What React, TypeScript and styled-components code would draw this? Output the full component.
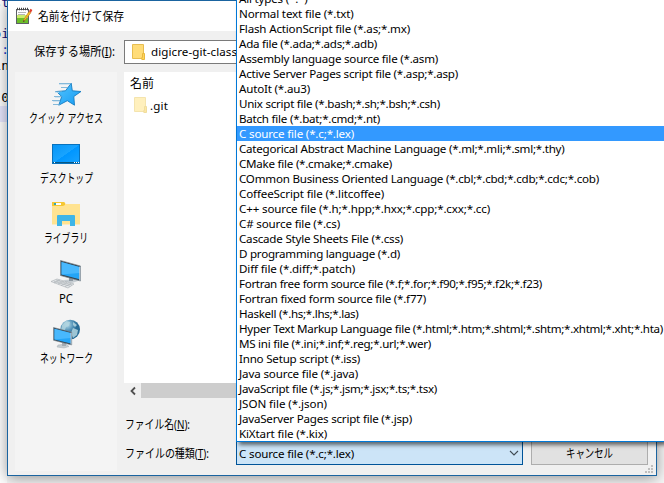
import React, { useLayoutEffect, useRef } from "react";
import styled, { createGlobalStyle } from "styled-components";

const GlobalStyle = createGlobalStyle`
  * { box-sizing: border-box; }
  body { margin: 0; overflow: hidden; }
`;

const Desktop = styled.div`
  position: relative;
  width: 664px;
  height: 483px;
  overflow: hidden;
  display: flex;
  background: #f7f7f7;
  color: #000;
  font: 12px/15px "Noto Sans", "Noto Sans CJK JP", sans-serif;
`;

const Editor = styled.div`
  width: 7px;
  height: 483px;
  flex: none;
  background: #fff;
  font: 13px/16px "DejaVu Sans Mono", monospace;
`;

const EditorLine = styled.div<{ $gap?: number; $current?: boolean; $color?: string }>`
  height: 16px;
  margin-top: ${(p) => p.$gap ?? 0}px;
  display: flex;
  justify-content: flex-end;
  overflow: hidden;
  color: ${(p) => p.$color ?? "#000"};
  background: ${(p) => (p.$current ? "#e8e8ff" : "transparent")};
`;

const EditorText = styled.span`
  margin-right: -2px;
`;

const Dialog = styled.section`
  position: relative;
  width: 650px;
  height: 476px;
  flex: none;
  display: flex;
  flex-direction: column;
  border: 1px solid #1a64a0;
  background: #f0f0f0;
  box-shadow: 0 2px 14px rgba(0, 0, 0, 0.42);
`;

const TitleBar = styled.header`
  height: 30px;
  flex: none;
  display: flex;
  align-items: center;
  gap: 5px;
  padding-left: 8px;
  background: #fff;
`;

const LookIn = styled.div`
  height: 41px;
  flex: none;
  display: flex;
  align-items: center;
  padding-left: 26px;
`;

const LookInLabel = styled.div`
  width: 90px;
`;

const FolderCombo = styled.div`
  display: flex;
  align-items: center;
  gap: 5px;
  width: 260px;
  height: 24px;
  padding-left: 7px;
  border: 1px solid #7a7a7a;
  background: #fff;
`;

const Content = styled.div`
  display: grid;
  grid-template-columns: 102px 1fr;
  column-gap: 7px;
  padding: 0 8px 4px 7px;
  flex: 1;
`;

const Places = styled.nav`
  background: #f4f4f4;
  padding-top: 6px;
`;

const Place = styled.div`
  height: 60px;
  display: flex;
  flex-direction: column;
  align-items: center;
  svg { display: block; flex: none; }
`;

const PlaceLabel = styled.div`
  height: 16px;
  margin-top: 1px;
  display: flex;
  justify-content: center;
`;

const Main = styled.div`
  display: flex;
  flex-direction: column;
`;

const FileList = styled.div`
  height: 326px;
  display: flex;
  flex-direction: column;
  background: #fff;
`;

const ListHeader = styled.div`
  height: 22px;
  padding: 4px 0 0 6px;
`;

const FileRow = styled.div`
  display: flex;
  align-items: center;
  gap: 2px;
  height: 22px;
  padding-left: 10px;
`;

const ScrollBar = styled.div`
  margin-top: auto;
  height: 15px;
  display: flex;
  background: #f0f0f0;
`;

const ScrollButton = styled.div`
  width: 17px;
  display: flex;
  align-items: center;
  justify-content: center;
`;

const ScrollThumb = styled.div`
  flex: 1;
  background: #cdcdcd;
`;

const Field = styled.div<{ $top: number; $height: number }>`
  margin-top: ${(p) => p.$top}px;
  height: ${(p) => p.$height}px;
  display: flex;
  align-items: center;
  padding-left: 1px;
`;

const FieldLabel = styled.div`
  width: 111px;
`;

const TypeCombo = styled.div`
  width: 287px;
  height: 24px;
  display: flex;
  align-items: center;
  justify-content: space-between;
  padding: 0 3px 0 2px;
  border: 1px solid #005499;
  background: #cce4f7;
`;

const Button = styled.div`
  width: 117px;
  height: 24px;
  margin-left: 8px;
  display: flex;
  align-items: center;
  justify-content: center;
  padding-right: 1px;
  border: 1px solid #adadad;
  background: #e1e1e1;
`;

const Grip = styled.div`
  position: absolute;
  right: 3px;
  bottom: 2px;
  line-height: 0;
`;

const Menu = styled.div`
  position: absolute;
  left: 236px;
  top: -10px;
  width: 440px;
  height: 452px;
  border: 1px solid #0078d7;
  background: #fff;
  box-shadow: 3px 3px 4px rgba(0, 0, 0, 0.55);
`;

const MenuItem = styled.div<{ $selected?: boolean }>`
  height: 15px;
  line-height: 15px;
  padding-left: 2px;
  white-space: nowrap;
  background: ${(p) => (p.$selected ? "#3399ff" : "transparent")};
  color: ${(p) => (p.$selected ? "#fff" : "#000")};
`;

const FitBox = styled.span`
  display: inline-block;
  white-space: nowrap;
  vertical-align: top;
`;

const FitInner = styled.span<{ $squeeze?: boolean }>`
  display: inline-block;
  white-space: pre;
  transform-origin: 0 50%;
  font-size: ${(p) => (p.$squeeze ? 12.5 : 11.6)}px;
  vertical-align: top;
`;

/* Condenses a label to a fixed width: tracking for Latin, horizontal scale for Japanese. */
function Fit({ w, squeeze, children }: {
  w: number; squeeze?: boolean; children: React.ReactNode;
}) {
  const box = useRef<HTMLSpanElement>(null);
  const inner = useRef<HTMLSpanElement>(null);
  useLayoutEffect(() => {
    const el = inner.current;
    if (!el || !box.current) return;
    el.style.transform = "none";
    el.style.letterSpacing = "0px";
    const natural = el.getBoundingClientRect().width;
    if (squeeze) el.style.transform = `scaleX(${w / natural})`;
    else el.style.letterSpacing = `${(w - natural) / (el.textContent || " ").length}px`;
    box.current.style.width = `${w}px`;
  }, [w, squeeze]);
  return (
    <FitBox ref={box}>
      <FitInner ref={inner} $squeeze={squeeze}>{children}</FitInner>
    </FitBox>
  );
}

const types: [string, number][] = [
  ["All types (*.*)", 307],
  ["Normal text file (*.txt)", 353],
  ["Flash ActionScript file (*.as;*.mx)", 409.5],
  ["Ada file (*.ada;*.ads;*.adb)", 376.5],
  ["Assembly language source file (*.asm)", 437.5],
  ["Active Server Pages script file (*.asp;*.asp)", 457.5],
  ["AutoIt (*.au3)", 309.5],
  ["Unix script file (*.bash;*.sh;*.bsh;*.csh)", 439.5],
  ["Batch file (*.bat;*.cmd;*.nt)", 379.5],
  ["C source file (*.c;*.lex)", 353.5],
  ["Categorical Abstract Machine Language (*.ml;*.mli;*.sml;*.thy)", 564],
  ["CMake file (*.cmake;*.cmake)", 391.5],
  ["COmmon Business Oriented Language (*.cbl;*.cbd;*.cdb;*.cdc;*.cob)", 598.5],
  ["CoffeeScript file (*.litcoffee)", 383.5],
  ["C++ source file (*.h;*.hpp;*.hxx;*.cpp;*.cxx;*.cc)", 489.5],
  ["C# source file (*.cs)", 339.5],
  ["Cascade Style Sheets File (*.css)", 402.5],
  ["D programming language (*.d)", 399.5],
  ["Diff file (*.diff;*.patch)", 354.5],
  ["Fortran free form source file (*.f;*.for;*.f90;*.f95;*.f2k;*.f23)", 541.5],
  ["Fortran fixed form source file (*.f77)", 425.5],
  ["Haskell (*.hs;*.lhs;*.las)", 358],
  ["Hyper Text Markup Language file (*.html;*.htm;*.shtml;*.shtm;*.xhtml;*.xht;*.hta)", 662.5],
  ["MS ini file (*.ini;*.inf;*.reg;*.url;*.wer)", 430.5],
  ["Inno Setup script (*.iss)", 359.5],
  ["Java source file (*.java)", 357.5],
  ["JavaScript file (*.js;*.jsm;*.jsx;*.ts;*.tsx)", 436.5],
  ["JSON file (*.json)", 326.5],
  ["JavaServer Pages script file (*.jsp)", 411.5],
  ["KiXtart file (*.kix)", 326.5],
];

const NotepadIcon = () => (
  <svg width="17" height="18" viewBox="0 0 17 18">
    <rect x=".5" y="2.5" width="12" height="14" fill="#fff" stroke="#5c6066" />
    <path d="M1 8h11v3H1z" fill="#c9ec6c" />
    <path d="M1 11h11v5H1z" fill="#6cbf2a" />
    <path d="M2 5.5h8M2 7.5h7" stroke="#b5b5b5" />
    <path d="M1 2h12" stroke="#444" strokeWidth="2.4" strokeDasharray="1 1" />
    <path d="M13 4.5 8.2 12l-1 2.5 2-1.4L14.800 5.800z" fill="#f7bd24" stroke="#bb7915" strokeWidth=".6" />
    <path d="m13 4.200 1.500-2.400 1.900 1.300-1.500 2.600z" fill="#e0402d" />
    <path d="m7 15 .6-1.800L9 14z" fill="#333" />
  </svg>
);

const FolderIcon = ({ pale }: { pale?: boolean }) => (
  <svg width="14" height="16" viewBox="0 0 14 16">
    <path d="M.5.5h11v14H.5z" fill={pale ? "#fff0bd" : "#ffdc78"} stroke={pale ? "#f4e4ae" : "#e7bd50"} />
    <path d="M10.5 9.500h2v6H9.800v-2h.7z" fill={pale ? "#ffe8a2" : "#ffd45a"} stroke={pale ? "#efdda0" : "#e8b83e"} />
  </svg>
);

const StarIcon = () => (
  <svg width="32" height="32" viewBox="0 0 32 32">
    <defs>
      <linearGradient id="star" x1="0" y1="0" x2="1" y2="1">
        <stop offset="0" stopColor="#55c5ff" /><stop offset="1" stopColor="#159bf2" />
      </linearGradient>
    </defs>
    <path d="M21.200 5.200 22.300 12.800 31 13.500 23.800 18.500 24.500 27.200 17.300 22.700 8.800 27.200 11.700 18.500 6.500 13.500 15.500 12.800Z" fill="url(#star)" stroke="#147cc2" strokeWidth=".9" />
    <path d="M9 5.500h12M11 9.500h7M5 13.500h7M4 18.500h8M2 22.500h8M3 26.500h7" stroke="#67a9d3" strokeWidth=".8" />
    <path d="M9 6.500h10M5 14.500h4M5 19.500h6M3 23.500h6" stroke="#c5deed" strokeWidth=".8" />
  </svg>
);

const DesktopIcon = () => (
  <svg width="32" height="32" viewBox="0 0 32 32">
    <defs>
      <linearGradient id="desk" x1="0" y1="0" x2="1" y2="1">
        <stop offset="0" stopColor="#0795f5" /><stop offset=".5" stopColor="#19a4ff" />
        <stop offset=".51" stopColor="#0096ff" /><stop offset="1" stopColor="#18a3ff" />
      </linearGradient>
    </defs>
    <rect x="2.500" y="6.500" width="27" height="19" fill="url(#desk)" stroke="#0872bd" />
    <path d="M3 24.500h26" stroke="#075783" />
    <path d="M4 24.500h1M24 24.500h1M26 24.500h1M28 24.500h1" stroke="#fff" />
  </svg>
);

const LibraryIcon = () => (
  <svg width="32" height="32" viewBox="0 0 32 32">
    <path d="M2 4h12l2 2h14v20.500H2z" fill="#ffe391" />
    <path d="M2 4h12l1 1v2l-2 1H2z" fill="#f6c733" />
    <path d="M4 5h7v2H4z" fill="#fff" /><path d="M4 5h2v2H4z" fill="#30a6b3" />
    <path d="M7 28V18q0-1 1-1h16q1 0 1 1v10h-5v-5h-8v5z" fill="#3eb5e7" />
  </svg>
);

const Screen = () => (
  <>
    <path d="m0 0 20 5.500v15L0 15z" fill="#303f4b" stroke="#78858e" strokeWidth=".7" />
    <path d="m1 1.400 18 5v12.400L1 14z" fill="#24a5f7" />
    <path d="M19 6.400v6L1 14V1.400z" fill="#58c0ff" opacity=".7" />
    <path d="m18.800 6 1 .3v14l-1-.3z" fill="#d3e1eb" />
  </>
);

const PcIcon = () => (
  <svg width="32" height="32" viewBox="0 0 32 32">
    <path d="m14 22 12-1 2 2-6 2-7-1z" fill="#c6cdd2" />
    <path d="m19 18 4 1v4h-4z" fill="#8f9aa3" />
    <g transform="translate(10.500 2.500)"><Screen /></g>
    <path d="m1 23.500 6-2.500 17 5-6 4z" fill="#e3e6e8" stroke="#a4abb0" strokeWidth=".6" />
    <path d="m4 23.200 16 5M6 22l16 5M4 25l6-3M8 26l6-3M11 27.500l6-3M15 28.500l6-3" stroke="#a4abb0" strokeWidth=".6" />
  </svg>
);

const NetworkIcon = () => (
  <svg width="32" height="32" viewBox="0 0 32 32">
    <defs>
      <radialGradient id="globe" cx=".35" cy=".25">
        <stop offset="0" stopColor="#b8ddeb" /><stop offset=".6" stopColor="#5594b8" /><stop offset="1" stopColor="#286c96" />
      </radialGradient>
    </defs>
    <circle cx="20.200" cy="11.500" r="9.800" fill="url(#globe)" />
    <path d="m12 7 4-4 4 1-1 4-3 1-1 3h-4zm11-3 4 3-2 2-2-2zm0 6 5 2-1 5-4 3-2-5z" fill="#b2d5df" opacity=".85" />
    <path d="m8 27 8-1 3 2.500-5 1.500-7-1z" fill="#c6cdd2" stroke="#9ba4aa" strokeWidth=".4" />
    <path d="M12 24h4v4h-4z" fill="#a4adb3" />
    <g transform="translate(3.500 9.500) scale(.91 .85)"><Screen /></g>
  </svg>
);

const places: { label: string; w: number; icon: React.ReactNode }[] = [
  { label: "クイック アクセス", w: 74, icon: <StarIcon /> },
  { label: "デスクトップ", w: 53, icon: <DesktopIcon /> },
  { label: "ライブラリ", w: 44, icon: <LibraryIcon /> },
  { label: "PC", w: 14, icon: <PcIcon /> },
  { label: "ネットワーク", w: 53, icon: <NetworkIcon /> },
];

export default function App() {
  return (
    <>
      <GlobalStyle />
      <Desktop>
        <Editor>
          <EditorLine $gap={-5} $color="#10107c"><EditorText>st</EditorText></EditorLine>
          <EditorLine $gap={15} $color="#10107c"><EditorText>bi</EditorText></EditorLine>
          <EditorLine $color="#1a3ccc"><EditorText>:</EditorText></EditorLine>
          <EditorLine><EditorText>in</EditorText></EditorLine>
          <EditorLine $gap={16}><EditorText>0</EditorText></EditorLine>
          <EditorLine $current />
        </Editor>
        <Dialog>
          <TitleBar>
            <NotepadIcon />
            <Fit w={86} squeeze>名前を付けて保存</Fit>
          </TitleBar>
          <LookIn>
            <LookInLabel><Fit w={81} squeeze>保存する場所(<u>I</u>):</Fit></LookInLabel>
            <FolderCombo>
              <FolderIcon />
              <Fit w={86}>digicre-git-class</Fit>
            </FolderCombo>
          </LookIn>
          <Content>
            <Places>
              {places.map((p) => (
                <Place key={p.label}>
                  {p.icon}
                  <PlaceLabel><Fit w={p.w} squeeze>{p.label}</Fit></PlaceLabel>
                </Place>
              ))}
            </Places>
            <Main>
              <FileList>
                <ListHeader><Fit w={24} squeeze>名前</Fit></ListHeader>
                <FileRow><FolderIcon pale /><Fit w={18}>.git</Fit></FileRow>
                <ScrollBar>
                  <ScrollButton>
                    <svg width="8" height="10" viewBox="0 0 8 10"><path d="M6 1.500 2.500 5 6 8.500" fill="none" stroke="#505050" strokeWidth="1.800" /></svg>
                  </ScrollButton>
                  <ScrollThumb />
                </ScrollBar>
              </FileList>
              <Field $top={14} $height={24}>
                <FieldLabel><Fit w={65} squeeze>ファイル名(<u>N</u>):</Fit></FieldLabel>
              </Field>
              <Field $top={5} $height={24}>
                <FieldLabel><Fit w={84} squeeze>ファイルの種類(<u>T</u>):</Fit></FieldLabel>
                <TypeCombo>
                  <Fit w={115}>C source file (*.c;*.lex)</Fit>
                  <svg width="10" height="8" viewBox="0 0 10 8"><path d="m1 2 4 4 4-4" fill="none" stroke="#404b54" strokeWidth="1.100" /></svg>
                </TypeCombo>
                <Button><Fit w={47} squeeze>キャンセル</Fit></Button>
              </Field>
            </Main>
          </Content>
          <Grip>
            <svg width="8" height="8" viewBox="0 0 8 8" fill="#bfbfbf">
              <path d="M6 0h2v2H6zM3 3h2v2H3zM6 3h2v2H6zM0 6h2v2H0zM3 6h2v2H3zM6 6h2v2H6z" />
            </svg>
          </Grip>
        </Dialog>
        <Menu>
          {types.map(([label, right]) => (
            <MenuItem key={label} $selected={label.startsWith("C source")}>
              <Fit w={right + 0.5 - 239}>{label}</Fit>
            </MenuItem>
          ))}
        </Menu>
      </Desktop>
    </>
  );
}
